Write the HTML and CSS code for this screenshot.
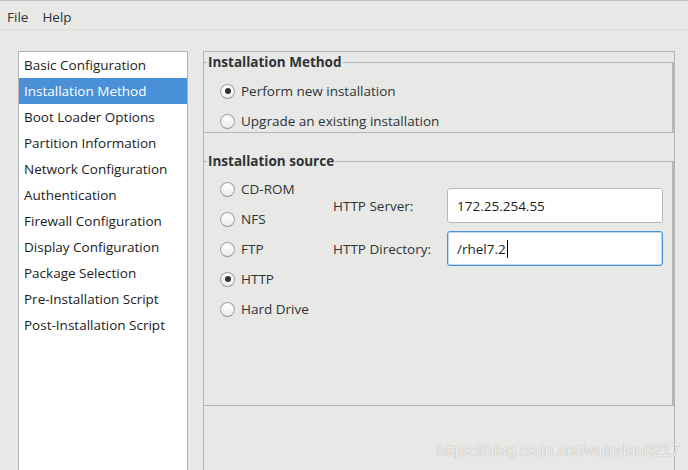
FILE: index.html
```html
<!DOCTYPE html>
<html>
<head>
<meta charset="utf-8">
<link rel="stylesheet" href="styles.css">
</head>
<body>
<div class="menubar">
  <span class="menu-item">File</span>
  <span class="menu-item">Help</span>
</div>
<div class="main">
  <ul class="sidebar">
    <li class="item">Basic Configuration</li>
    <li class="item selected">Installation Method</li>
    <li class="item">Boot Loader Options</li>
    <li class="item">Partition Information</li>
    <li class="item">Network Configuration</li>
    <li class="item">Authentication</li>
    <li class="item">Firewall Configuration</li>
    <li class="item">Display Configuration</li>
    <li class="item">Package Selection</li>
    <li class="item">Pre-Installation Script</li>
    <li class="item">Post-Installation Script</li>
  </ul>
  <div class="panel">
    <fieldset class="frame frame-method">
      <legend>Installation Method</legend>
      <div class="radios">
        <label class="radio"><span class="circle checked"></span>Perform new installation</label>
        <label class="radio"><span class="circle"></span>Upgrade an existing installation</label>
      </div>
    </fieldset>
    <fieldset class="frame frame-source">
      <legend>Installation source</legend>
      <div class="source-body">
        <div class="radios source-radios">
          <label class="radio"><span class="circle"></span>CD-ROM</label>
          <label class="radio"><span class="circle"></span>NFS</label>
          <label class="radio"><span class="circle"></span>FTP</label>
          <label class="radio"><span class="circle checked"></span>HTTP</label>
          <label class="radio"><span class="circle"></span>Hard Drive</label>
        </div>
        <div class="fields">
          <span class="field-label">HTTP Server:</span>
          <div class="entry">172.25.254.55</div>
          <span class="field-label">HTTP Directory:</span>
          <div class="entry focused">/rhel7.2<span class="caret"></span></div>
        </div>
      </div>
    </fieldset>
  </div>
</div>
<div class="watermark">https://blog.csdn.net/wuludan0217</div>
</body>
</html>
```
FILE: styles.css
```css
html, body {
  margin: 0;
  padding: 0;
}
body {
  width: 688px;
  height: 470px;
  overflow: hidden;
  position: relative;
  background: #e8e8e7;
  font-family: "Open Sans", "Noto Sans", sans-serif;
  font-size: 13.5px;
  color: #2e3436;
}
.menubar {
  height: 28px;
  border-top: 1px solid #c2c2c2;
  border-bottom: 1px solid #dcdcdb;
  display: flex;
  align-items: center;
  padding-top: 4px;
  box-sizing: border-box;
  height: 30px;
}
.menu-item {
  padding: 0 7px;
  color: #2e3436;
}
.main {
  display: flex;
  padding: 21px 0 0 18px;
  height: 440px;
  box-sizing: border-box;
}
.sidebar {
  list-style: none;
  margin: 0;
  padding: 0;
  width: 170px;
  height: 460px;
  box-sizing: border-box;
  background: #fff;
  border: 1px solid #b3b3b3;
  flex: none;
}
.item {
  height: 26px;
  line-height: 26px;
  padding-left: 5px;
  color: #1c1c1c;
  white-space: nowrap;
}
.item.selected {
  background: #4a90d9;
  color: #fff;
}
.panel {
  margin-left: 15px;
  width: 472px;
  height: 460px;
  box-sizing: border-box;
  border: 1px solid #b4b4b4;
  padding-top: 2px;
  flex: none;
}
.frame {
  margin: 0;
  border: 1px solid #b4b4b4;
  border-left: none;
  border-right: 2px solid #b8b8b8;
  padding: 0 0 0 3px;
  min-width: 0;
}
.frame legend {
  padding: 0 1px;
  font-weight: 700;
  font-size: 13.5px;
  line-height: 17px;
  color: #2e3436;
}
.frame-method .radios {
  padding-top: 9px;
}
.frame-source {
  margin-top: 20px;
  padding-bottom: 85px;
}
.radios {
  display: flex;
  flex-direction: column;
  gap: 8px;
  margin-left: 13px;
}
.source-body {
  display: flex;
  align-items: flex-start;
  padding-top: 8px;
}
.source-radios {
  width: 113px;
  flex: none;
}
.radio {
  display: flex;
  align-items: center;
  gap: 6px;
  height: 22px;
  color: #2e3436;
  white-space: nowrap;
}
.circle {
  width: 15px;
  height: 15px;
  box-sizing: border-box;
  border-radius: 50%;
  border: 1px solid #a4a4a4;
  border-bottom-color: #959595;
  background: linear-gradient(#ffffff, #ececec);
  display: flex;
  align-items: center;
  justify-content: center;
  flex: none;
}
.circle.checked::after {
  content: "";
  width: 6px;
  height: 6px;
  border-radius: 50%;
  background: #2e3436;
}
.fields {
  display: grid;
  grid-template-columns: 114px 216px;
  row-gap: 8px;
  align-items: center;
  margin-top: 10px;
}
.field-label {
  color: #2e3436;
  white-space: nowrap;
}
.entry {
  height: 35px;
  box-sizing: border-box;
  border: 1px solid #b8b8b5;
  border-radius: 3px;
  background: #fff;
  padding-left: 9px;
  display: flex;
  align-items: center;
  color: #1e1e1e;
}
.entry.focused {
  border: 1px solid #4a90d9;
  box-shadow: inset 0 0 0 1px rgba(74, 144, 217, 0.35);
}
.caret {
  display: inline-block;
  width: 1px;
  height: 18px;
  background: #000;
  margin-left: 1px;
}
.watermark {
  position: absolute;
  left: 437px;
  top: 442px;
  font-family: "Liberation Sans", Arial, sans-serif;
  font-size: 16px;
  color: rgba(255, 255, 255, 0.85);
  text-shadow: 0 0 1px rgba(110, 110, 110, 0.7);
  white-space: nowrap;
}
```
